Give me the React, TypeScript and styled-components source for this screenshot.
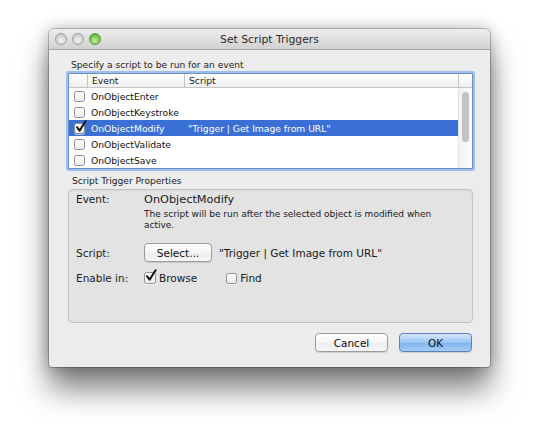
import styled, { createGlobalStyle } from 'styled-components';

const GlobalStyle = createGlobalStyle`
    html, body {
        margin: 0;
        background: #ffffff;
    }
    body {
        font-family: "DejaVu Sans", "Liberation Sans", sans-serif;
        color: #1a1a1a;
    }
`;

const Page = styled.div`
    width: 540px;
    height: 438px;
    padding: 29px 0 0 49px;
    box-sizing: border-box;
`;

const Window = styled.div`
    width: 441px;
    background: #ececec;
    border-radius: 5px 5px 3px 3px;
    box-shadow: 0 22px 30px rgba(0, 0, 0, 0.5), 0 0 16px rgba(0, 0, 0, 0.28), 0 0 0 1px rgba(0, 0, 0, 0.22);
    display: flex;
    flex-direction: column;
`;

const TitleBar = styled.div`
    height: 20px;
    border-bottom: 1px solid #a6a6a6;
    border-radius: 5px 5px 0 0;
    background: linear-gradient(#eeeeee, #d1d1d1);
    display: flex;
    align-items: center;
    position: relative;
    padding-left: 6px;
`;

const Lights = styled.div`
    display: flex;
    gap: 5px;
`;

const Light = styled.span<{ $green?: boolean }>`
    width: 12px;
    height: 12px;
    border-radius: 50%;
    box-sizing: border-box;
    border: 1px solid ${p => (p.$green ? '#5d9a43' : '#a2a2a2')};
    background: ${p => (p.$green
        ? 'radial-gradient(circle at 50% 65%, #c9f0a8, #7cc453 55%, #4f9a33)'
        : 'radial-gradient(circle at 50% 65%, #f4f4f4, #d2d2d2 60%, #b5b5b5)')};
`;

const Title = styled.div`
    position: absolute;
    left: 0;
    right: 0;
    text-align: center;
    font-size: 10.8px;
    color: #2b2b2b;
    pointer-events: none;
`;

const Body = styled.div`
    padding: 9px 17px 15px 19px;
    display: flex;
    flex-direction: column;
`;

const SectionLabel = styled.div<{ $small?: boolean }>`
    font-size: 9.1px;
    line-height: 13px;
    padding-left: ${p => (p.$small ? '4px' : '3px')};
    margin-top: ${p => (p.$small ? '6px' : '0')};
    color: #1c1c1c;
`;

const Table = styled.div`
    margin-top: 1px;
    border: 1px solid #6f8fc4;
    box-shadow: 0 0 0 2px #9cc0ee;
    border-radius: 1px;
    background: #fff;
    display: flex;
    flex-direction: column;
    font-size: 9.2px;
`;

const Columns = '18px 97px 1fr';

const HeaderRow = styled.div`
    display: grid;
    grid-template-columns: ${Columns} 14px;
    height: 13px;
    border-bottom: 1px solid #c4c4c4;
    background: linear-gradient(#ffffff, #efefef);
`;

const HeaderCell = styled.div<{ $sep?: boolean }>`
    border-left: ${p => (p.$sep ? '1px solid #c4c4c4' : 'none')};
    padding-left: 4px;
    line-height: 13px;
`;

const TableBody = styled.div`
    display: flex;
    height: 80px;
`;

const Rows = styled.div`
    flex: 1;
    display: flex;
    flex-direction: column;
`;

const Row = styled.div<{ $selected?: boolean }>`
    display: grid;
    grid-template-columns: ${Columns};
    align-items: center;
    height: 16px;
    background: ${p => (p.$selected ? '#3a6fd5' : 'transparent')};
    color: ${p => (p.$selected ? '#ffffff' : '#111')};
`;

const Cell = styled.div`
    padding-left: 4px;
    white-space: nowrap;
`;

const BoxCell = styled.div`
    display: flex;
    justify-content: flex-end;
    padding-right: 2px;
`;

const ScrollTrack = styled.div`
    width: 14px;
    border-left: 1px solid #e4e4e4;
    background: linear-gradient(90deg, #f3f3f3, #fbfbfb);
    display: flex;
    justify-content: center;
    padding-top: 4px;
    box-sizing: border-box;
`;

const Thumb = styled.div`
    width: 7px;
    height: 50px;
    border-radius: 4px;
    background: #c2c2c2;
`;

const BoxWrap = styled.span<{ $size?: number }>`
    position: relative;
    display: inline-block;
    width: ${p => p.$size ?? 11}px;
    height: ${p => p.$size ?? 11}px;
    flex: none;
`;

const Box = styled.span`
    display: block;
    width: 100%;
    height: 100%;
    box-sizing: border-box;
    border: 1px solid #8f8f8f;
    border-radius: 2.5px;
    background: linear-gradient(#ffffff, #ececec);
    box-shadow: 0 1px 0 rgba(255, 255, 255, 0.6);
`;

const Tick = styled.svg`
    position: absolute;
    left: 1px;
    top: -3px;
    width: 12px;
    height: 13px;
`;

const Check = ({ checked, size }: { checked?: boolean; size?: number }) => (
    <BoxWrap $size={size}>
        <Box />
        {checked && (
            <Tick viewBox="0 0 12 13">
                <path d="M2 7.2 L4.6 10.6 L10.6 1.2" fill="none" stroke="#111" strokeWidth="2" strokeLinecap="round" strokeLinejoin="round" />
            </Tick>
        )}
    </BoxWrap>
);

const GroupBox = styled.div`
    margin-top: 1px;
    height: 134px;
    box-sizing: border-box;
    border: 1px solid #c3c3c3;
    border-radius: 4px;
    background: #e3e3e3;
    box-shadow: inset 0 1px 2px rgba(0, 0, 0, 0.06);
    padding: 3px 7px 0 7px;
    display: flex;
    flex-direction: column;
    font-size: 10.5px;
`;

const PropRow = styled.div<{ $top?: number }>`
    display: grid;
    grid-template-columns: 68px 1fr;
    align-items: ${p => (p.$top !== undefined ? 'center' : 'baseline')};
    margin-top: ${p => p.$top ?? 0}px;
`;

const Label = styled.div`
    color: #1c1c1c;
`;

const Value = styled.div`
    font-size: 11.3px;
    line-height: 13px;
`;

const Desc = styled.div`
    font-size: 9px;
    line-height: 10.5px;
    margin-top: 3px;
    max-width: 305px;
`;

const Inline = styled.div`
    display: flex;
    align-items: center;
    gap: 7px;
`;

const Button = styled.button<{ $primary?: boolean; $w: number }>`
    font-family: inherit;
    font-size: 10.5px;
    width: ${p => p.$w}px;
    height: 19px;
    padding: 0;
    border-radius: 4px;
    color: #111;
    border: 1px solid ${p => (p.$primary ? '#5b80bf' : '#9b9b9b')};
    background: ${p => (p.$primary
        ? 'linear-gradient(#d4e7fb, #9cc6f3 50%, #7db2ef 51%, #a5cdf5)'
        : 'linear-gradient(#ffffff, #f6f6f6 50%, #ececec 51%, #f7f7f7)')};
    box-shadow: 0 1px 1px rgba(0, 0, 0, 0.12);
`;

const CheckLabel = styled.label`
    display: flex;
    align-items: center;
    gap: 3px;
    margin-right: 22px;
`;

const Footer = styled.div`
    display: flex;
    justify-content: flex-end;
    gap: 11px;
    margin-top: 10px;
    padding-right: 1px;
`;

const events = [
    { name: 'OnObjectEnter' },
    { name: 'OnObjectKeystroke' },
    { name: 'OnObjectModify', script: '"Trigger | Get Image from URL"', on: true },
    { name: 'OnObjectValidate' },
    { name: 'OnObjectSave' },
];

const App = () => (
    <Page>
        <GlobalStyle />
        <Window>
            <TitleBar>
                <Lights>
                    <Light />
                    <Light />
                    <Light $green />
                </Lights>
                <Title>Set Script Triggers</Title>
            </TitleBar>
            <Body>
                <SectionLabel>Specify a script to be run for an event</SectionLabel>
                <Table>
                    <HeaderRow>
                        <HeaderCell />
                        <HeaderCell $sep>Event</HeaderCell>
                        <HeaderCell $sep>Script</HeaderCell>
                        <HeaderCell $sep />
                    </HeaderRow>
                    <TableBody>
                        <Rows>
                            {events.map(ev => (
                                <Row key={ev.name} $selected={ev.on}>
                                    <BoxCell><Check checked={ev.on} /></BoxCell>
                                    <Cell>{ev.name}</Cell>
                                    <Cell>{ev.script}</Cell>
                                </Row>
                            ))}
                        </Rows>
                        <ScrollTrack><Thumb /></ScrollTrack>
                    </TableBody>
                </Table>
                <SectionLabel $small>Script Trigger Properties</SectionLabel>
                <GroupBox>
                    <PropRow>
                        <Label>Event:</Label>
                        <div>
                            <Value>OnObjectModify</Value>
                            <Desc>The script will be run after the selected object is modified when active.</Desc>
                        </div>
                    </PropRow>
                    <PropRow $top={13}>
                        <Label>Script:</Label>
                        <Inline>
                            <Button $w={68}>Select...</Button>
                            <span>"Trigger | Get Image from URL"</span>
                        </Inline>
                    </PropRow>
                    <PropRow $top={10}>
                        <Label>Enable in:</Label>
                        <Inline>
                            <CheckLabel><Check checked size={12} />Browse</CheckLabel>
                            <CheckLabel><Check />Find</CheckLabel>
                        </Inline>
                    </PropRow>
                </GroupBox>
                <Footer>
                    <Button $w={73}>Cancel</Button>
                    <Button $w={73} $primary>OK</Button>
                </Footer>
            </Body>
        </Window>
    </Page>
);

export default App;
